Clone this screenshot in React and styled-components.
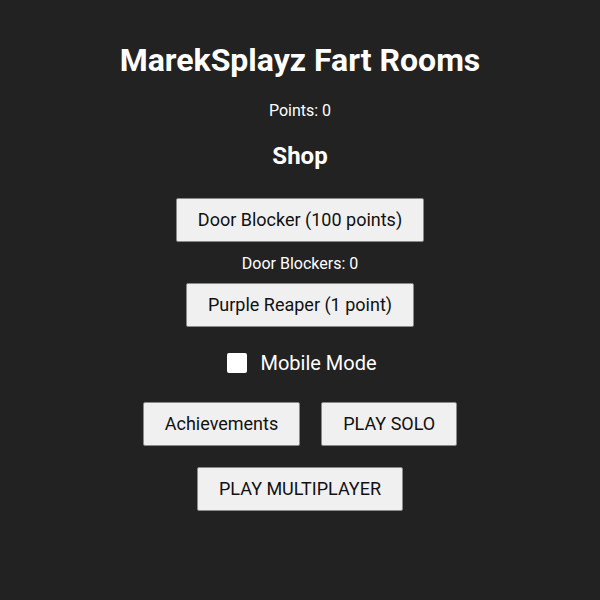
import React, { useState } from 'react'
import styled, { createGlobalStyle } from 'styled-components'

const GlobalStyle = createGlobalStyle`
  body {
    margin: 0;
    background: #222222;
    font-family: Roboto, "Noto Sans", sans-serif;
    color: #ffffff;
  }
`

const Page = styled.div`
  width: 600px;
  min-height: 600px;
  display: flex;
  flex-direction: column;
  align-items: center;
  padding-top: 40px;
  box-sizing: border-box;
`

const Title = styled.h1`
  margin: 0;
  font-size: 32px;
  font-weight: 700;
  line-height: 40px;
`

const Points = styled.p`
  margin: 21px 0 0;
  font-size: 16px;
  line-height: 20px;
`

const ShopTitle = styled.h2`
  margin: 20px 0 0;
  font-size: 24px;
  font-weight: 700;
  line-height: 30px;
`

const Button = styled.button`
  font-family: Roboto, "Noto Sans", sans-serif;
  font-size: 18px;
  line-height: 22px;
  color: #111;
  background: #f0f0f0;
  border: 1px solid #8a8a8a;
  border-radius: 2px;
  padding: 10px 21px;
  margin-top: ${p => p.$top || 0}px;
  cursor: pointer;
`

const Count = styled.p`
  margin: 12px 0 0;
  font-size: 16px;
  line-height: 20px;
`

const CheckRow = styled.label`
  margin-top: 24px;
  padding-left: 4px;
  display: flex;
  align-items: center;
  gap: 13px;
  font-size: 20px;
  line-height: 24px;
`

const Box = styled.span`
  width: 20px;
  height: 20px;
  background: ${p => (p.$on ? '#6aa0ff' : '#ffffff')};
  border-radius: 2px;
  display: inline-block;
`

const Row = styled.div`
  display: flex;
  gap: 21px;
  margin-top: 27px;
`

export default function App() {
  const [mobile, setMobile] = useState(false)
  return (
    <>
      <GlobalStyle />
      <Page>
        <Title>MarekSplayz Fart Rooms</Title>
        <Points>Points: 0</Points>
        <ShopTitle>Shop</ShopTitle>
        <Button $top={27}>Door Blocker (100 points)</Button>
        <Count>Door Blockers: 0</Count>
        <Button $top={9}>Purple Reaper (1 point)</Button>
        <CheckRow onClick={() => setMobile(!mobile)}>
          <Box $on={mobile} />
          Mobile Mode
        </CheckRow>
        <Row>
          <Button>Achievements</Button>
          <Button>PLAY SOLO</Button>
        </Row>
        <Button $top={21}>PLAY MULTIPLAYER</Button>
      </Page>
    </>
  )
}
